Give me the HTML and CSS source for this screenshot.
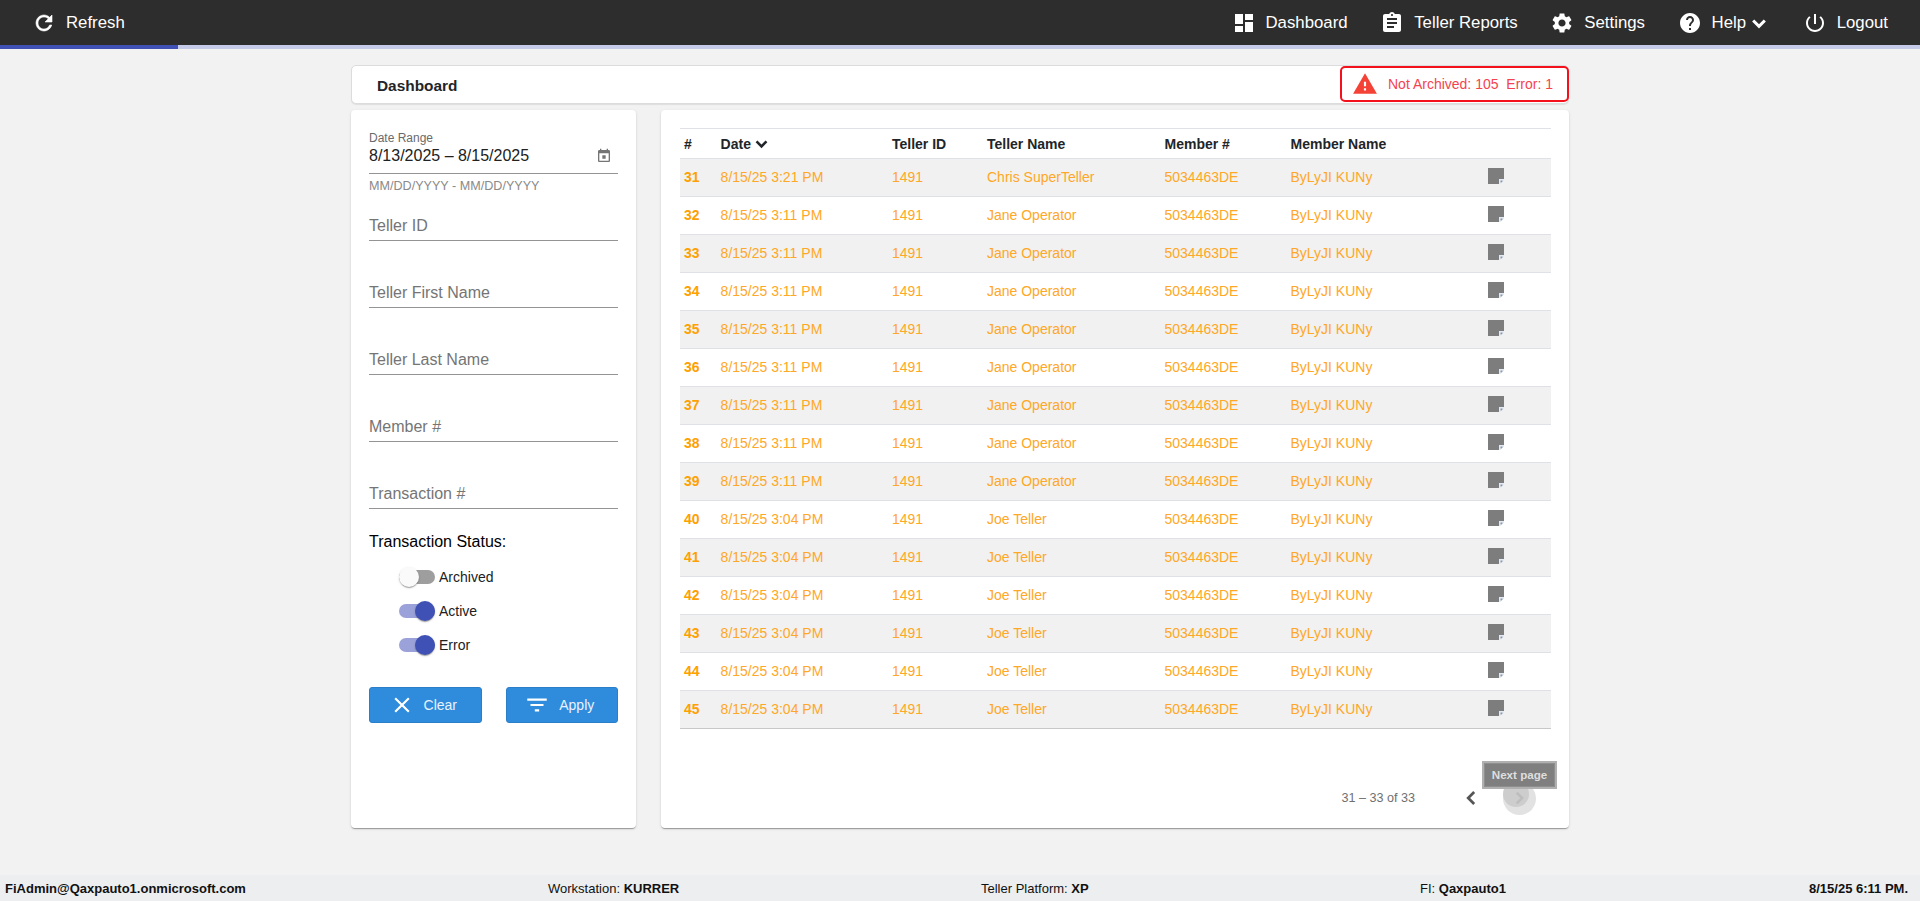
FILE: index.html
```html
<!DOCTYPE html>
<html lang="en">
<head>
<meta charset="utf-8">
<title>Dashboard</title>
<link rel="stylesheet" href="styles.css">
</head>
<body>
<svg class="sprite" aria-hidden="true">
  <symbol id="i-refresh" viewBox="0 0 24 24"><path d="M17.65 6.35C16.2 4.9 14.21 4 12 4c-4.42 0-7.99 3.58-7.99 8s3.57 8 7.99 8c3.73 0 6.84-2.55 7.73-6h-2.08c-.82 2.33-3.04 4-5.65 4-3.31 0-6-2.69-6-6s2.69-6 6-6c1.66 0 3.14.69 4.22 1.78L13 11h7V4l-2.35 2.35z"/></symbol>
  <symbol id="i-dashboard" viewBox="0 0 24 24"><path d="M3 13h8V3H3v10zm0 8h8v-6H3v6zm10 0h8V11h-8v10zm0-18v6h8V3h-8z"/></symbol>
  <symbol id="i-assignment" viewBox="0 0 24 24"><path d="M19 3h-4.18C14.4 1.84 13.3 1 12 1c-1.3 0-2.4.84-2.82 2H5c-1.1 0-2 .9-2 2v14c0 1.1.9 2 2 2h14c1.1 0 2-.9 2-2V5c0-1.1-.9-2-2-2zm-7 0c.55 0 1 .45 1 1s-.45 1-1 1-1-.45-1-1 .45-1 1-1zm2 14H7v-2h7v2zm3-4H7v-2h10v2zm0-4H7V7h10v2z"/></symbol>
  <symbol id="i-settings" viewBox="0 0 24 24"><path d="M19.14 12.94c.04-.3.06-.61.06-.94 0-.32-.02-.64-.07-.94l2.03-1.58c.18-.14.23-.41.12-.61l-1.92-3.32c-.12-.22-.37-.29-.59-.22l-2.39.96c-.5-.38-1.03-.7-1.62-.94l-.36-2.54c-.04-.24-.24-.41-.48-.41h-3.84c-.24 0-.43.17-.47.41l-.36 2.54c-.59.24-1.13.57-1.62.94l-2.39-.96c-.22-.08-.47 0-.59.22L2.74 8.87c-.12.21-.08.47.12.61l2.03 1.58c-.05.3-.09.63-.09.94s.02.64.07.94l-2.03 1.58c-.18.14-.23.41-.12.61l1.92 3.32c.12.22.37.29.59.22l2.39-.96c.5.38 1.03.7 1.62.94l.36 2.54c.05.24.24.41.48.41h3.84c.24 0 .44-.17.47-.41l.36-2.54c.59-.24 1.13-.56 1.62-.94l2.39.96c.22.08.47 0 .59-.22l1.92-3.32c.12-.22.07-.47-.12-.61l-2.01-1.58zM12 15.6c-1.98 0-3.6-1.62-3.6-3.6s1.62-3.6 3.6-3.6 3.6 1.62 3.6 3.6-1.62 3.6-3.6 3.6z"/></symbol>
  <symbol id="i-help" viewBox="0 0 24 24"><path d="M12 2C6.48 2 2 6.48 2 12s4.48 10 10 10 10-4.48 10-10S17.52 2 12 2zm1 17h-2v-2h2v2zm2.07-7.75l-.9.92C13.45 12.9 13 13.5 13 15h-2v-.5c0-1.1.45-2.1 1.17-2.83l1.24-1.26c.37-.36.59-.86.59-1.41 0-1.1-.9-2-2-2s-2 .9-2 2H8c0-2.21 1.79-4 4-4s4 1.79 4 4c0 .88-.36 1.68-.93 2.25z"/></symbol>
  <symbol id="i-power" viewBox="0 0 24 24"><path d="M13 3h-2v10h2V3zm4.83 2.17l-1.42 1.42C17.99 7.86 19 9.81 19 12c0 3.87-3.13 7-7 7s-7-3.13-7-7c0-2.19 1.01-4.14 2.58-5.42L6.17 5.17C4.23 6.82 3 9.26 3 12c0 4.97 4.03 9 9 9s9-4.03 9-9c0-2.74-1.23-5.18-3.17-6.83z"/></symbol>
  <symbol id="i-down" viewBox="0 0 24 24"><path d="M5 9l7 7 7-7" fill="none" stroke="currentColor" stroke-width="3.600"/></symbol>
  <symbol id="i-warning" viewBox="0 0 24 24"><path d="M1 21h22L12 2 1 21zm12-3h-2v-2h2v2zm0-4h-2v-4h2v4z"/></symbol>
  <symbol id="i-calendar" viewBox="0 0 24 24"><path d="M19 3h-1V1h-2v2H8V1H6v2H5c-1.11 0-1.99.9-1.99 2L3 19c0 1.1.89 2 2 2h14c1.1 0 2-.9 2-2V5c0-1.1-.9-2-2-2zm0 16H5V8h14v11zM9.500 11h5v5h-5z"/></symbol>
  <symbol id="i-close" viewBox="0 0 24 24"><path d="M19 6.41L17.59 5 12 10.59 6.41 5 5 6.41 10.59 12 5 17.59 6.41 19 12 13.41 17.59 19 19 17.59 13.41 12z"/></symbol>
  <symbol id="i-filter" viewBox="0 0 24 24"><path d="M10 18h4v-2h-4v2zM3 6v2h18V6H3zm3 7h12v-2H6v2z"/></symbol>
  <symbol id="i-left" viewBox="0 0 24 24"><path d="M14 6.500L8.500 12l5.500 5.500" fill="none" stroke="currentColor" stroke-width="2.500"/></symbol>
  <symbol id="i-right" viewBox="0 0 24 24"><path d="M9 7l5 5-5 5" fill="none" stroke="currentColor" stroke-width="2.400"/></symbol>
  <symbol id="i-note" viewBox="0 0 16 16"><path d="M0 0h16v11h-5v5H0z" fill="#7d7d7d"/><path d="M11 11h5v1.500l-3.500 3.500H11z" fill="#e3ebf6"/><path d="M12.500 12.500h2v1l-1 1h-1z" fill="#8f97a3"/></symbol>
</svg>

<header class="topbar">
  <a class="nav-item nav-refresh"><svg class="nav-icon"><use href="#i-refresh"/></svg><span>Refresh</span></a>
  <nav class="nav-right">
    <a class="nav-item"><svg class="nav-icon"><use href="#i-dashboard"/></svg><span>Dashboard</span></a>
    <a class="nav-item"><svg class="nav-icon"><use href="#i-assignment"/></svg><span>Teller Reports</span></a>
    <a class="nav-item"><svg class="nav-icon"><use href="#i-settings"/></svg><span>Settings</span></a>
    <a class="nav-item"><svg class="nav-icon"><use href="#i-help"/></svg><span>Help</span><svg class="nav-caret"><use href="#i-down"/></svg></a>
    <a class="nav-item"><svg class="nav-icon"><use href="#i-power"/></svg><span>Logout</span></a>
  </nav>
</header>
<div class="progress"><div class="progress-fill"></div></div>

<main class="main">
  <div class="content">
    <section class="title-card">
      <h1 class="title">Dashboard</h1>
      <div class="alert"><svg class="alert-icon"><use href="#i-warning"/></svg><span class="alert-text">Not Archived: 105&nbsp; Error: 1</span></div>
    </section>
    <div class="columns">
      <aside class="card filters">
        <div class="date-field">
          <div class="date-label">Date Range</div>
          <div class="date-value"><span>8/13/2025 – 8/15/2025</span><svg class="date-icon"><use href="#i-calendar"/></svg></div>
        </div>
        <div class="date-hint">MM/DD/YYYY - MM/DD/YYYY</div>
        <div class="field first">Teller ID</div>
        <div class="field">Teller First Name</div>
        <div class="field">Teller Last Name</div>
        <div class="field">Member #</div>
        <div class="field">Transaction #</div>
        <div class="status-title">Transaction Status:</div>
        <div class="toggles">
          <div class="toggle-row"><span class="toggle"><span class="track"></span><span class="thumb"></span></span><span>Archived</span></div>
          <div class="toggle-row"><span class="toggle on"><span class="track"></span><span class="thumb"></span></span><span>Active</span></div>
          <div class="toggle-row"><span class="toggle on"><span class="track"></span><span class="thumb"></span></span><span>Error</span></div>
        </div>
        <div class="buttons">
          <button class="btn"><svg class="btn-icon"><use href="#i-close"/></svg><span>Clear</span></button>
          <button class="btn"><svg class="btn-icon"><use href="#i-filter"/></svg><span>Apply</span></button>
        </div>
      </aside>
      <section class="card results">
        <table class="grid">
          <colgroup><col class="c-num"><col class="c-date"><col class="c-id"><col class="c-name"><col class="c-member"><col class="c-mname"><col></colgroup>
          <thead>
            <tr><th>#</th><th><span class="th-sort">Date<svg class="sort"><use href="#i-down"/></svg></span></th><th>Teller ID</th><th>Teller Name</th><th>Member #</th><th>Member Name</th><th></th></tr>
          </thead>
          <tbody>
            <tr><td class="num">31</td><td>8/15/25 3:21 PM</td><td>1491</td><td>Chris SuperTeller</td><td>5034463DE</td><td>ByLyJI KUNy</td><td class="note"><svg class="note-icon"><use href="#i-note"/></svg></td></tr>
            <tr><td class="num">32</td><td>8/15/25 3:11 PM</td><td>1491</td><td>Jane Operator</td><td>5034463DE</td><td>ByLyJI KUNy</td><td class="note"><svg class="note-icon"><use href="#i-note"/></svg></td></tr>
            <tr><td class="num">33</td><td>8/15/25 3:11 PM</td><td>1491</td><td>Jane Operator</td><td>5034463DE</td><td>ByLyJI KUNy</td><td class="note"><svg class="note-icon"><use href="#i-note"/></svg></td></tr>
            <tr><td class="num">34</td><td>8/15/25 3:11 PM</td><td>1491</td><td>Jane Operator</td><td>5034463DE</td><td>ByLyJI KUNy</td><td class="note"><svg class="note-icon"><use href="#i-note"/></svg></td></tr>
            <tr><td class="num">35</td><td>8/15/25 3:11 PM</td><td>1491</td><td>Jane Operator</td><td>5034463DE</td><td>ByLyJI KUNy</td><td class="note"><svg class="note-icon"><use href="#i-note"/></svg></td></tr>
            <tr><td class="num">36</td><td>8/15/25 3:11 PM</td><td>1491</td><td>Jane Operator</td><td>5034463DE</td><td>ByLyJI KUNy</td><td class="note"><svg class="note-icon"><use href="#i-note"/></svg></td></tr>
            <tr><td class="num">37</td><td>8/15/25 3:11 PM</td><td>1491</td><td>Jane Operator</td><td>5034463DE</td><td>ByLyJI KUNy</td><td class="note"><svg class="note-icon"><use href="#i-note"/></svg></td></tr>
            <tr><td class="num">38</td><td>8/15/25 3:11 PM</td><td>1491</td><td>Jane Operator</td><td>5034463DE</td><td>ByLyJI KUNy</td><td class="note"><svg class="note-icon"><use href="#i-note"/></svg></td></tr>
            <tr><td class="num">39</td><td>8/15/25 3:11 PM</td><td>1491</td><td>Jane Operator</td><td>5034463DE</td><td>ByLyJI KUNy</td><td class="note"><svg class="note-icon"><use href="#i-note"/></svg></td></tr>
            <tr><td class="num">40</td><td>8/15/25 3:04 PM</td><td>1491</td><td>Joe Teller</td><td>5034463DE</td><td>ByLyJI KUNy</td><td class="note"><svg class="note-icon"><use href="#i-note"/></svg></td></tr>
            <tr><td class="num">41</td><td>8/15/25 3:04 PM</td><td>1491</td><td>Joe Teller</td><td>5034463DE</td><td>ByLyJI KUNy</td><td class="note"><svg class="note-icon"><use href="#i-note"/></svg></td></tr>
            <tr><td class="num">42</td><td>8/15/25 3:04 PM</td><td>1491</td><td>Joe Teller</td><td>5034463DE</td><td>ByLyJI KUNy</td><td class="note"><svg class="note-icon"><use href="#i-note"/></svg></td></tr>
            <tr><td class="num">43</td><td>8/15/25 3:04 PM</td><td>1491</td><td>Joe Teller</td><td>5034463DE</td><td>ByLyJI KUNy</td><td class="note"><svg class="note-icon"><use href="#i-note"/></svg></td></tr>
            <tr><td class="num">44</td><td>8/15/25 3:04 PM</td><td>1491</td><td>Joe Teller</td><td>5034463DE</td><td>ByLyJI KUNy</td><td class="note"><svg class="note-icon"><use href="#i-note"/></svg></td></tr>
            <tr><td class="num">45</td><td>8/15/25 3:04 PM</td><td>1491</td><td>Joe Teller</td><td>5034463DE</td><td>ByLyJI KUNy</td><td class="note"><svg class="note-icon"><use href="#i-note"/></svg></td></tr>
          </tbody>
        </table>
        <div class="pager">
          <span class="pager-range">31 – 33 of 33</span>
          <span class="pager-btn"><svg class="pager-icon"><use href="#i-left"/></svg></span>
          <span class="pager-btn next">
            <span class="ripple-outer"></span><span class="ripple-inner"></span>
            <svg class="pager-icon"><use href="#i-right"/></svg>
            <span class="tooltip">Next page</span>
          </span>
        </div>
      </section>
    </div>
  </div>
</main>

<footer class="statusbar">
  <strong>FiAdmin@Qaxpauto1.onmicrosoft.com</strong>
  <span>Workstation: <strong>KURRER</strong></span>
  <span>Teller Platform: <strong>XP</strong></span>
  <span>FI: <strong>Qaxpauto1</strong></span>
  <strong>8/15/25 6:11 PM.</strong>
</footer>
</body>
</html>
```
FILE: styles.css
```css
* { box-sizing: border-box; }
html, body { margin: 0; height: 100%; }
body {
  display: flex;
  flex-direction: column;
  height: 901px;
  overflow: hidden;
  background: #f2f2f2;
  font-family: "Liberation Sans", Arial, sans-serif;
  font-size: 14px;
  color: #212121;
}
.sprite { display: none; }

/* top bar */
.topbar {
  height: 45px;
  flex: none;
  display: flex;
  align-items: center;
  justify-content: space-between;
  background: #2d2d2d;
  color: #fff;
  padding: 0 32px 0 32px;
  font-size: 16.800px;
}
.nav-item { display: flex; align-items: center; }
.nav-icon { width: 24px; height: 24px; fill: #fff; margin-right: 10px; }
.nav-refresh .nav-icon { margin-right: 10px; stroke: #fff; stroke-width: .6px; }
.nav-right { display: flex; align-items: center; gap: 32.600px; }
.nav-caret { width: 20px; height: 20px; color: #fff; margin-left: 3px; margin-right: 1px; }
.progress { height: 4px; flex: none; background: #c5cae9; }
.progress-fill { width: 178px; height: 100%; background: #3f51b5; }

/* content */
.main { flex: 1; min-height: 0; padding-top: 16px; }
.content { width: 1218px; margin: 0 auto; }
.title-card {
  position: relative;
  height: 39px;
  background: #fff;
  border: 1px solid #dcdcdc;
  border-radius: 5px;
  box-shadow: 0 1px 1px rgba(0,0,0,.08);
  display: flex;
  align-items: center;
}
.title { margin: 2px 0 0 25px; font-size: 15.400px; font-weight: 700; color: #212529; }
.alert {
  position: absolute;
  right: -1px;
  top: 0;
  width: 229px;
  height: 36px;
  background: #fff;
  border: 2px solid #f4111c;
  border-radius: 5px;
  display: flex;
  align-items: center;
  padding-left: 10px;
  color: #f4434f;
}
.alert-icon { width: 26px; height: 26px; fill: #f44336; }
.alert-text { margin-left: 10px; font-size: 14px; }
.columns {
  display: grid;
  grid-template-columns: 285px 908px;
  column-gap: 25px;
  margin-top: 6px;
  height: 718px;
}
.card {
  background: #fff;
  border-radius: 4px;
  box-shadow: 0 2px 1px -1px rgba(0,0,0,.2), 0 1px 1px 0 rgba(0,0,0,.14), 0 1px 3px 0 rgba(0,0,0,.12);
}

/* filters */
.filters { padding: 22px 18px 0; }
.date-field { border-bottom: 1px solid #949494; padding-bottom: 8px; }
.date-label { font-size: 12px; line-height: 12px; color: #6a6a6a; }
.date-value {
  display: flex;
  justify-content: space-between;
  align-items: center;
  margin-top: 1px;
  height: 20px;
  padding-top: 1px;
  font-size: 16px;
  color: #212121;
}
.date-icon { width: 16px; height: 16px; fill: #757575; margin-right: 6px; }
.date-hint { margin-top: 5px; font-size: 12.600px; line-height: 14px; color: #8a8a8a; }
.field {
  margin-top: 41px;
  height: 26px;
  padding-top: 1px;
  line-height: 20px;
  border-bottom: 1px solid #949494;
  font-size: 16px;
  color: #757575;
}
.field.first { margin-top: 22px; }
.status-title { margin-top: 23px; font-size: 16px; line-height: 20px; color: #000; }
.toggles { margin-top: 8px; padding-left: 30px; }
.toggle-row { display: flex; align-items: center; height: 34px; font-size: 14px; color: #212121; }
.toggle { position: relative; display: block; width: 36px; height: 20px; margin-right: 4px; }
.track { position: absolute; left: 0; right: 0; top: 3px; height: 14px; border-radius: 7px; background: #9e9e9e; }
.thumb {
  position: absolute;
  left: 0;
  top: 0;
  width: 20px;
  height: 20px;
  border-radius: 50%;
  background: #fafafa;
  box-shadow: 0 2px 1px -1px rgba(0,0,0,.2), 0 1px 1px 0 rgba(0,0,0,.14), 0 1px 3px 0 rgba(0,0,0,.12);
}
.toggle.on .track { background: #9aa2d9; }
.toggle.on .thumb { left: 16px; background: #3f51b5; }
.buttons { display: flex; justify-content: space-between; margin-top: 25px; }
.btn {
  width: 112.500px;
  height: 36px;
  display: flex;
  align-items: center;
  justify-content: center;
  gap: 9px;
  border: 1px solid #2b7fc9;
  border-radius: 3px;
  background: #2f8cdd;
  color: #e8f2fb;
  font: 14px "Liberation Sans", Arial, sans-serif;
  padding: 0 5px 0 0;
}
.btn-icon { width: 26px; height: 26px; fill: #fff; }

/* table */
.results {
  display: flex;
  flex-direction: column;
  padding: 18px 18px 6px 19px;
  position: relative;
}
.grid { width: 871px; table-layout: fixed; border-collapse: collapse; border-top: 1px solid #e0e1e7; }
.c-num { width: 36.600px; }
.c-date { width: 171.400px; }
.c-id { width: 95px; }
.c-name { width: 177.500px; }
.c-member { width: 126px; }
.c-mname { width: 183.500px; }
.grid th {
  height: 30px;
  padding: 0 4px;
  text-align: left;
  font-size: 14px;
  font-weight: 700;
  color: #212529;
  border-bottom: 1px solid #e0e1e7;
}
.th-sort { display: flex; align-items: center; gap: 2px; height: 16px; }
.sort { width: 17px; height: 17px; flex: none; color: #212529; }
.grid td {
  height: 38px;
  padding: 0 4px 1px;
  color: #ffa726;
  font-size: 14px;
  border-bottom: 1px solid #e0e1e7;
}
.grid tbody tr:nth-child(odd) { background: #f1f1f1; }
.grid tbody tr:last-child td { border-bottom-color: #c8c8c8; }
.grid td.num { font-weight: 700; color: #ffa000; }
.grid td.note { padding: 0 0 0 18px; }
.note-icon { display: block; width: 16px; height: 16px; margin-top: -3px; }
.pager {
  margin-top: auto;
  height: 48px;
  display: flex;
  align-items: center;
  justify-content: flex-end;
  padding-right: 7px;
}
.pager-range { font-size: 12.600px; color: #6f6f6f; margin-right: 33px; }
.pager-btn { position: relative; display: flex; align-items: center; justify-content: center; width: 48px; height: 48px; color: #555; }
.pager-icon { position: relative; width: 26px; height: 26px; }
.ripple-outer { position: absolute; left: 7px; top: 8px; width: 33px; height: 33px; border-radius: 50%; background: #e2e2e2; }
.ripple-inner { position: absolute; left: 7px; top: 7px; width: 26px; height: 26px; border-radius: 50%; background: #cdcdcd; }
.next { color: #bdbdbd; }
.tooltip {
  position: absolute;
  left: -14px;
  top: -13px;
  width: 75px;
  height: 28px;
  padding-bottom: 2px;
  display: flex;
  align-items: center;
  justify-content: center;
  background: #7f7f7f;
  border: 2px solid #b0b0b0;
  box-shadow: inset 0 0 0 1px #8e8e8e;
  color: #dedede;
  font-size: 11.600px;
  font-weight: 700;
}

/* status bar */
.statusbar {
  height: 26px;
  flex: none;
  display: grid;
  grid-template-columns: 543px 433px 439px 389px auto;
  align-items: center;
  padding: 0 0 0 5px;
  background: #eceef0;
  font-size: 13px;
  color: #111;
}
```
